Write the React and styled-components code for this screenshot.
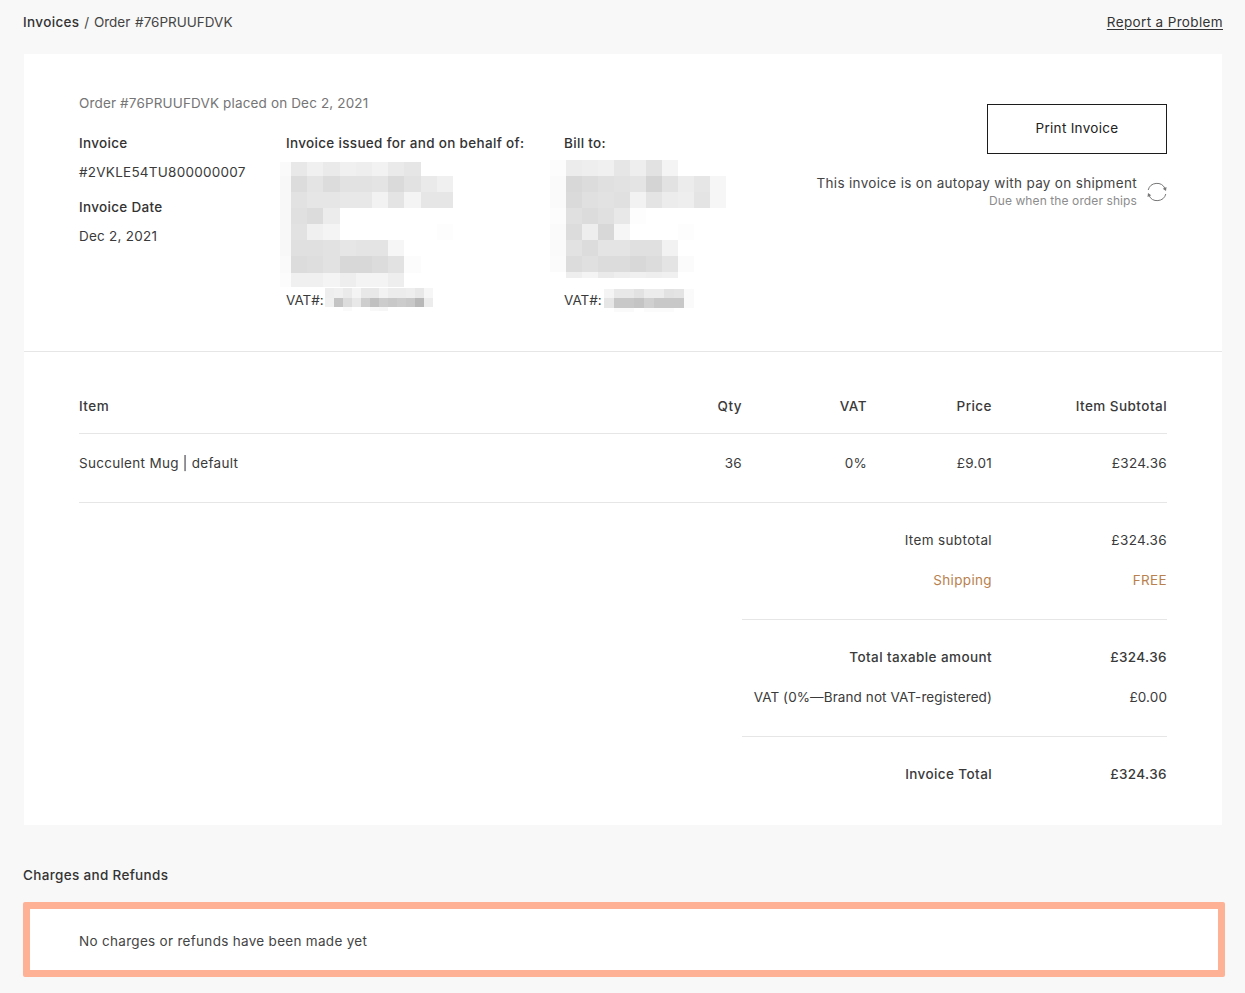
import React from "react";
import styled, { createGlobalStyle } from "styled-components";

const Global = createGlobalStyle`
  html, body { margin: 0; padding: 0; background: #f8f8f8; }
  body { font-family: Inter, "Liberation Sans", sans-serif; font-size: 13.5px; line-height: 18px; color: #3a3a3a; letter-spacing: 0.25px; }
  * { box-sizing: border-box; }
`;

const Page = styled.div`
  width: 1245px;
  height: 993px;
  padding-left: 24px;
  overflow: hidden;
`;
const TopBar = styled.header`
  margin-left: -1px;
  width: 1200px;
  height: 54px;
  padding-top: 13px;
  display: flex;
  justify-content: space-between;
  align-items: flex-start;
`;
const Crumbs = styled.div`
  color: #444;
  word-spacing: 1px;
  letter-spacing: 0;
`;
const CrumbRoot = styled.span`
  font-weight: 500;
  color: #333;
  letter-spacing: 0.35px;
`;
const ReportLink = styled.a`
  color: #333;
  letter-spacing: 0.36px;
  text-decoration: underline;
  text-underline-offset: 2px;
`;
const Card = styled.main`
  width: 1198px;
  height: 771px;
  background: #fff;
`;
const Head = styled.section`
  height: 298px;
  border-bottom: 1px solid #e6e6e6;
  padding: 40px 55px 0;
  display: flex;
  justify-content: space-between;
`;
const OrderLine = styled.div`
  color: #757575;
  margin-bottom: 22px;
  letter-spacing: 0.15px;
`;
const Columns = styled.div`
  display: flex;
`;
const Column = styled.div`
  width: ${(p) => p.$w}px;
`;
const Label = styled.div`
  font-weight: 500;
  color: #333;
  letter-spacing: 0.32px;
  margin-top: ${(p) => p.$mt || 0}px;
`;
const Value = styled.div`
  margin-top: 11px;
`;
const Mosaic = styled.svg`
  display: block;
`;
const MosaicSlot = styled.div`
  margin-left: ${(p) => p.$ml}px;
  margin-top: ${(p) => p.$mt}px;
`;
const VatRow = styled.div`
  display: flex;
  align-items: flex-start;
  height: 18px;
  letter-spacing: 0;
  margin-top: ${(p) => p.$mt}px;
`;
const Actions = styled.div`
  display: flex;
  flex-direction: column;
  align-items: flex-end;
  padding-top: 10px;
`;
const PrintButton = styled.button`
  width: 180px;
  height: 50px;
  padding: 0 0 2px;
  border: 1px solid #1c1c1c;
  background: #fff;
  color: #222;
  font: inherit;
  letter-spacing: 0.3px;
`;
const Autopay = styled.div`
  display: flex;
  align-items: center;
  gap: 10px;
  margin-top: 20px;
  text-align: right;
`;
const AutopayMain = styled.div`
  color: #444;
  letter-spacing: 0.32px;
`;
const AutopaySub = styled.div`
  color: #8c8c8c;
  font-size: 12px;
  letter-spacing: 0.1px;
`;
const Items = styled.section`
  padding: 41px 55px 0;
`;
const ItemRow = styled.div`
  display: grid;
  grid-template-columns: 1fr 100px 125px 125px 175px;
  align-items: center;
  height: ${(p) => p.$h}px;
  border-bottom: 1px solid #e6e6e6;
  font-weight: ${(p) => (p.$head ? 500 : 400)};
  letter-spacing: ${(p) => (p.$head ? 0.46 : 0.3)}px;
  padding-bottom: ${(p) => (p.$head ? 15 : 11)}px;
`;
const Right = styled.div`
  text-align: right;
`;
const Summary = styled.div`
  width: 425px;
  margin-left: auto;
  padding-top: 17px;
`;
const SumRow = styled.div`
  display: grid;
  grid-template-columns: 1fr 175px;
  height: 40px;
  align-items: center;
  text-align: right;
  font-weight: ${(p) => (p.$bold ? 500 : 400)};
  letter-spacing: ${(p) => (p.$bold ? 0.4 : p.$tight ? 0.1 : 0.36)}px;
  color: ${(p) => (p.$accent ? "#b8814e" : "inherit")};
`;
const Rule = styled.hr`
  border: 0;
  border-top: 1px solid #e6e6e6;
  margin: 19px 0 17px;
`;
const SectionTitle = styled.h2`
  margin: 41px 0 0 -1px;
  height: 36px;
  font: inherit;
  font-weight: 500;
  color: #333;
  letter-spacing: 0.33px;
`;
const Notice = styled.div`
  margin-left: -1px;
  width: 1202px;
  height: 75px;
  background: #fff;
  border: 7px solid #ffb195;
  border-radius: 2px;
  padding: 2px 0 0 49px;
  display: flex;
  align-items: center;
  color: #444;
  letter-spacing: 0.3px;
`;

const g = (v) => `#${v}${v}${v}`;
const Blocks = ({ w, h, cols, rows, leftW }) => (
  <Mosaic width={w} height={h} viewBox={`0 0 ${w} ${h}`} shapeRendering="crispEdges">
    {rows.map((r, y) =>
      r.cells.map((c, x) =>
        c ? (
          <rect key={`${y}-${x}`} x={x === 0 ? 0 : leftW + (x - 1) * cols} y={r.y} width={x === 0 ? leftW : cols} height={r.h} fill={g(c)} />
        ) : null
      )
    )}
  </Mosaic>
);

const issuer = [
  { y: 0, h: 14, cells: ["fa", "e8", "f0", "ea", "f0", "ee", "f2", "ea", "e6"] },
  { y: 14, h: 16, cells: ["f8", "dc", "e4", "dc", "e2", "e2", "e4", "da", "e2", "ea", "f0"] },
  { y: 30, h: 16, cells: ["f8", "e2", "e6", "e6", "e8", "e8", "f2", "e4", "f4", "e6", "e6"] },
  { y: 46, h: 16, cells: ["f8", "e0", "dc", "ec"] },
  { y: 62, h: 16, cells: ["f8", "e2", "f0", "f4", "", "", "", "", "", "", "fd"] },
  { y: 78, h: 16, cells: ["f8", "e0", "e0", "e2", "e6", "e4", "e4", "f6"] },
  { y: 94, h: 17, cells: ["fa", "dc", "de", "e2", "d8", "d8", "dc", "e2", "fc"] },
  { y: 111, h: 14, cells: ["fc", "f0", "f0", "f4", "ee", "f4", "f4", "ee"] },
];
const billTo = [
  { y: 0, h: 16, cells: ["fc", "ec", "ee", "f0", "e6", "ee", "e2", "f4"] },
  { y: 16, h: 16, cells: ["fa", "d8", "dc", "e0", "e2", "e4", "d4", "e2", "ec", "e6", "f6"] },
  { y: 32, h: 16, cells: ["fa", "da", "e0", "e2", "e0", "f2", "e4", "ec", "ee", "e4", "f6"] },
  { y: 48, h: 16, cells: ["fc", "e0", "dc", "e0", "e8", "fd"] },
  { y: 64, h: 16, cells: ["fa", "dc", "ee", "d8", "f6", "", "", "", "fd"] },
  { y: 80, h: 16, cells: ["fa", "e2", "dc", "e4", "e4", "e0", "e0", "f2"] },
  { y: 96, h: 16, cells: ["fb", "dc", "e0", "dc", "dc", "d8", "dc", "e4", "fb"] },
  { y: 112, h: 6, cells: ["", "ee", "f4", "ea", "ee", "f0", "ee", "f0"] },
];
const vatA = [
  { y: 0, h: 10, cells: ["ee", "f0", "ea", "f4", "e8", "e8", "f2", "ec", "ec", "ee", "e8", "f6"] },
  { y: 10, h: 9, cells: ["f0", "c4", "dc", "e8", "ce", "c0", "cc", "c8", "cc", "c8", "b8", "ec"] },
  { y: 19, h: 4, cells: ["", "", "fa", "", "", "f8", "f6", "", "", "", "", ""] },
];
const vatB = [
  { y: 0, h: 9, cells: ["f4", "e8", "e8", "e2", "ec", "ec", "e2", "e4", "fa"] },
  { y: 9, h: 10, cells: ["e6", "c8", "c8", "c4", "d0", "c8", "c8", "c8", "fa"] },
  { y: 19, h: 4, cells: ["", "fa", "fa", "", "fb", "fb", "fb", "", ""] },
];

const SyncIcon = () => (
  <svg width="20" height="20" viewBox="0 0 20 20" fill="none" stroke="#777" strokeWidth="1">
    <path d="M1.2 8 A9 9 0 0 1 18 6.5" />
    <path d="M18.8 12 A9 9 0 0 1 2 13.5" />
    <path d="M19.5 5 L19 9 L15.8 6.8 Z" fill="#777" stroke="none" />
    <path d="M0.5 15 L1 11 L4.2 13.2 Z" fill="#777" stroke="none" />
  </svg>
);

export default function App() {
  return (
    <Page>
      <Global />
      <TopBar>
        <Crumbs>
          <CrumbRoot>Invoices</CrumbRoot> / Order #76PRUUFDVK
        </Crumbs>
        <ReportLink href="#">Report a Problem</ReportLink>
      </TopBar>
      <Card>
        <Head>
          <div>
            <OrderLine>Order #76PRUUFDVK placed on Dec 2, 2021</OrderLine>
            <Columns>
              <Column $w={207}>
                <Label>Invoice</Label>
                <Value>#2VKLE54TU800000007</Value>
                <Label $mt={17}>Invoice Date</Label>
                <Value>Dec 2, 2021</Value>
              </Column>
              <Column $w={278}>
                <Label>Invoice issued for and on behalf of:</Label>
                <MosaicSlot $ml={-6} $mt={10}>
                  <Blocks w={175} h={125} cols={16.2} leftW={11} rows={issuer} />
                </MosaicSlot>
                <VatRow $mt={4}>
                  VAT#:
                  <MosaicSlot $ml={1} $mt={-3}>
                    <Blocks w={110} h={23} cols={9} leftW={9} rows={vatA} />
                  </MosaicSlot>
                </VatRow>
              </Column>
              <Column $w={180}>
                <Label>Bill to:</Label>
                <MosaicSlot $ml={-14} $mt={8}>
                  <Blocks w={176} h={118} cols={16} leftW={16} rows={billTo} />
                </MosaicSlot>
                <VatRow $mt={13}>
                  VAT#:
                  <MosaicSlot $ml={2} $mt={-2}>
                    <Blocks w={90} h={23} cols={10} leftW={10} rows={vatB} />
                  </MosaicSlot>
                </VatRow>
              </Column>
            </Columns>
          </div>
          <Actions>
            <PrintButton>Print Invoice</PrintButton>
            <Autopay>
              <div>
                <AutopayMain>This invoice is on autopay with pay on shipment</AutopayMain>
                <AutopaySub>Due when the order ships</AutopaySub>
              </div>
              <SyncIcon />
            </Autopay>
          </Actions>
        </Head>
        <Items>
          <ItemRow $head $h={41}>
            <div>Item</div>
            <Right>Qty</Right>
            <Right>VAT</Right>
            <Right>Price</Right>
            <Right>Item Subtotal</Right>
          </ItemRow>
          <ItemRow $h={69}>
            <div>Succulent Mug | default</div>
            <Right>36</Right>
            <Right>0%</Right>
            <Right>£9.01</Right>
            <Right>£324.36</Right>
          </ItemRow>
          <Summary>
            <SumRow><div>Item subtotal</div><div>£324.36</div></SumRow>
            <SumRow $accent><div>Shipping</div><div>FREE</div></SumRow>
            <Rule />
            <SumRow $bold><div>Total taxable amount</div><div>£324.36</div></SumRow>
            <SumRow $tight><div>VAT (0%—Brand not VAT-registered)</div><div>£0.00</div></SumRow>
            <Rule />
            <SumRow $bold><div>Invoice Total</div><div>£324.36</div></SumRow>
          </Summary>
        </Items>
      </Card>
      <SectionTitle>Charges and Refunds</SectionTitle>
      <Notice>No charges or refunds have been made yet</Notice>
    </Page>
  );
}
